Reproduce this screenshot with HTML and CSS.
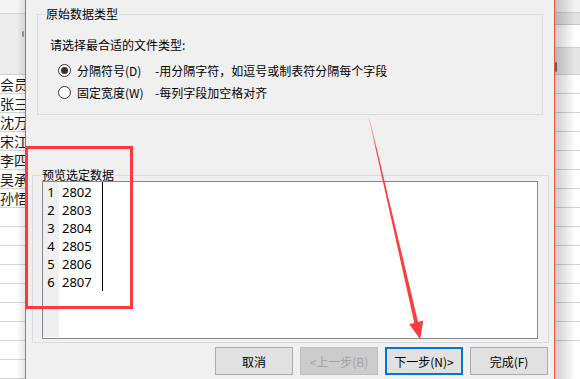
FILE: index.html
```html
<!DOCTYPE html>
<html lang="zh-CN">
<head>
    <meta charset="UTF-8">
    <meta name="viewport" content="width=device-width, initial-scale=1.0">
    <title>文本导入向导</title>
    <link rel="stylesheet" href="styles.css">
</head>
<body>

<div class="screen">
    <!-- worksheet behind the dialog, left side -->
    <div class="sheet sheet-left">
        <div class="sheet-top"></div>
        <div class="sheet-gap"></div>
        <div class="cell">会员</div>
        <div class="cell">张三</div>
        <div class="cell">沈万</div>
        <div class="cell">宋江</div>
        <div class="cell">李四</div>
        <div class="cell">吴承</div>
        <div class="cell">孙悟</div>
        <div class="cell"></div>
        <div class="cell"></div>
        <div class="cell"></div>
        <div class="cell"></div>
        <div class="cell"></div>
        <div class="cell"></div>
        <div class="cell"></div>
        <div class="cell"></div>
        <div class="cell"></div>
        <span class="sheet-grip grip-left"></span>
    </div>

    <div class="dialog">
        <fieldset class="group group-type">
            <legend>原始数据类型</legend>
            <p class="prompt">请选择最合适的文件类型:</p>
            <div class="radio-row">
                <span class="radio checked"></span>
                <span class="radio-name">分隔符号(D)</span>
                <span class="radio-desc">-用分隔字符，如逗号或制表符分隔每个字段</span>
            </div>
            <div class="radio-row">
                <span class="radio"></span>
                <span class="radio-name">固定宽度(W)</span>
                <span class="radio-desc">-每列字段加空格对齐</span>
            </div>
        </fieldset>

        <fieldset class="group group-preview">
            <legend>预览选定数据</legend>
            <div class="preview">
                <div class="line-nums">
                    <div>1</div><div>2</div><div>3</div><div>4</div><div>5</div><div>6</div>
                </div>
                <div class="line-data">
                    <div>2802</div><div>2803</div><div>2804</div><div>2805</div><div>2806</div><div>2807</div>
                </div>
            </div>
        </fieldset>

        <div class="buttons">
            <button class="btn">取消</button>
            <button class="btn btn-disabled">&lt;上一步(B)</button>
            <button class="btn btn-focus">下一步(N)&gt;</button>
            <button class="btn">完成(F)</button>
        </div>
    </div>

    <!-- worksheet behind the dialog, right side -->
    <div class="sheet sheet-right">
        <div class="r-top"></div>
        <div class="r-head"></div>
        <div class="r-row r-tall"></div>
        <div class="r-row r-sel"></div>
        <div class="r-row"></div>
        <div class="r-row"></div>
        <div class="r-row"></div>
        <div class="r-row"></div>
        <div class="r-row"></div>
        <div class="r-row"></div>
        <div class="r-row"></div>
        <div class="r-row"></div>
        <div class="r-row"></div>
        <div class="r-row"></div>
        <div class="r-row"></div>
        <div class="r-row"></div>
        <div class="r-row"></div>
        <div class="r-row"></div>
        <span class="sheet-grip grip-right"></span>
    </div>

    <!-- annotations drawn over the screenshot -->
    <div class="mark-box"></div>
    <svg class="arrow" width="580" height="379" viewBox="0 0 580 379">
        <defs>
            <linearGradient id="fade" x1="369" y1="118" x2="420" y2="339" gradientUnits="userSpaceOnUse">
                <stop offset="0" stop-color="#ff3d3d" stop-opacity="0.3"/>
                <stop offset="0.15" stop-color="#ff3d3d" stop-opacity="1"/>
                <stop offset="1" stop-color="#ff3d3d" stop-opacity="1"/>
            </linearGradient>
        </defs>
        <polygon fill="url(#fade)" points="369.4,117.9 418.1,322.0 423.2,320.6 420.2,339.5 409.2,324.1 414.3,322.9 368.8,118.1"/>
    </svg>
</div>

</body>
</html>
```

FILE: styles.css
```css
body {
    margin: 0;
    font-family: "Noto Sans CJK SC", "Microsoft YaHei", sans-serif;
    font-size: 12px;
    color: #000;
    background-color: #fff;
}

.screen {
    position: relative;
    display: flex;
    width: 580px;
    height: 379px;
    overflow: hidden;
}

/* worksheet strips */
.sheet {
    position: relative;
    width: 25px;
    flex: none;
    overflow: hidden;
    background-color: #fff;
}

.sheet-top {
    height: 13px;
    background-color: #f5f5f5;
    border-bottom: 1px solid #d2d2d2;
}

.sheet-gap {
    height: 60px;
    background-color: #ececec;
    border-bottom: 1px solid #d0d0d0;
}

.cell {
    height: 18px;
    line-height: 18px;
    font-size: 14px;
    white-space: nowrap;
    color: #1b1b1b;
    border-bottom: 1px solid #d4d4d4;
}

.sheet-left::after {
    content: "";
    position: absolute;
    top: 0;
    right: 0;
    width: 8px;
    height: 100%;
    background: linear-gradient(to right, rgba(0, 0, 0, 0), rgba(0, 0, 0, 0.1));
}

.sheet-right::after {
    content: "";
    position: absolute;
    top: 0;
    left: 0;
    width: 20px;
    height: 100%;
    background: linear-gradient(to right, rgba(0, 0, 0, 0.2), rgba(0, 0, 0, 0));
}

.r-top {
    height: 12px;
    background-color: #f2f2f2;
    border-bottom: 1px solid #cfcfcf;
}

.r-head {
    height: 11px;
    background-color: #e2e2e2;
    border-bottom: 1px solid #c6c6c6;
}

.r-row {
    height: 18px;
    border-bottom: 1px solid #d2d2d2;
}

.r-tall {
    height: 22px;
}

.r-sel {
    height: 26px;
    background-color: #e6e6e6;
}

.sheet-grip {
    position: absolute;
    width: 2px;
    background-color: #777;
    border-radius: 1px;
}

.grip-left {
    right: 1px;
    top: 31px;
    height: 6px;
    background-color: #9a9a9a;
}

.grip-right {
    left: 0;
    top: 62px;
    height: 10px;
}

/* dialog */
.dialog {
    width: 528px;
    flex: none;
    background-color: #f0f0f0;
    border-left: 1px solid #ea573b;
    border-right: 1px solid #ea573b;
}

.group {
    margin: 0;
    padding: 0;
    border: 1px solid #dcdcdc;
    min-width: 0;
}

.group legend {
    padding: 0 1px;
    line-height: 12px;
    font-size: 12px;
}

.group-type {
    width: 504px;
    margin: 8px 0 0 11px;
    padding-bottom: 11px;
}

.group-type legend {
    margin-left: 7px;
}

.prompt {
    margin: 17px 0 6px 12px;
    line-height: 16px;
}

.radio-row {
    display: flex;
    align-items: center;
    height: 22px;
    margin-left: 20px;
}

.radio {
    box-sizing: border-box;
    width: 13px;
    height: 13px;
    border: 1px solid #333;
    border-radius: 50%;
    background-color: #fff;
    margin-right: 6px;
    display: flex;
    align-items: center;
    justify-content: center;
}

.radio.checked::after {
    content: "";
    width: 7px;
    height: 7px;
    border-radius: 50%;
    background-color: #333;
}

.radio-name {
    width: 78px;
}

.group-preview {
    width: 515px;
    margin: 54px 0 0 6px;
    padding-bottom: 3px;
}

.group-preview legend {
    margin-left: 8px;
}

.preview {
    display: flex;
    align-items: flex-start;
    width: 494px;
    height: 156px;
    margin-left: 9px;
    background-color: #fff;
    border: 1px solid #828790;
    font-family: "Noto Sans", "Segoe UI", sans-serif;
    font-size: 13px;
}

.line-nums {
    width: 16px;
    height: 154px;
    padding-top: 1px;
    background-color: #efefef;
    text-align: center;
}

.line-nums div,
.line-data div {
    height: 18px;
    line-height: 18px;
}

.line-data {
    width: 40px;
    padding: 1px 0 0 3px;
    border-right: 1px solid #000;
}

.buttons {
    display: flex;
    justify-content: flex-end;
    gap: 7px;
    margin-top: 4px;
    padding-right: 6px;
}

.btn {
    box-sizing: border-box;
    width: 78px;
    height: 28px;
    padding: 0;
    font-family: inherit;
    font-size: 12px;
    color: #000;
    background-color: #e1e1e1;
    border: 1px solid #adadad;
}

.btn-disabled {
    color: #a3a3a3;
    background-color: #cccccc;
    border-color: #bfbfbf;
}

.btn-focus {
    border: 2px solid #0078d7;
}

/* red annotations */
.mark-box {
    position: absolute;
    left: 25px;
    top: 146px;
    width: 102px;
    height: 157px;
    border: 3px solid #fb3a3a;
}

.arrow {
    position: absolute;
    left: 0;
    top: 0;
    pointer-events: none;
}
```
